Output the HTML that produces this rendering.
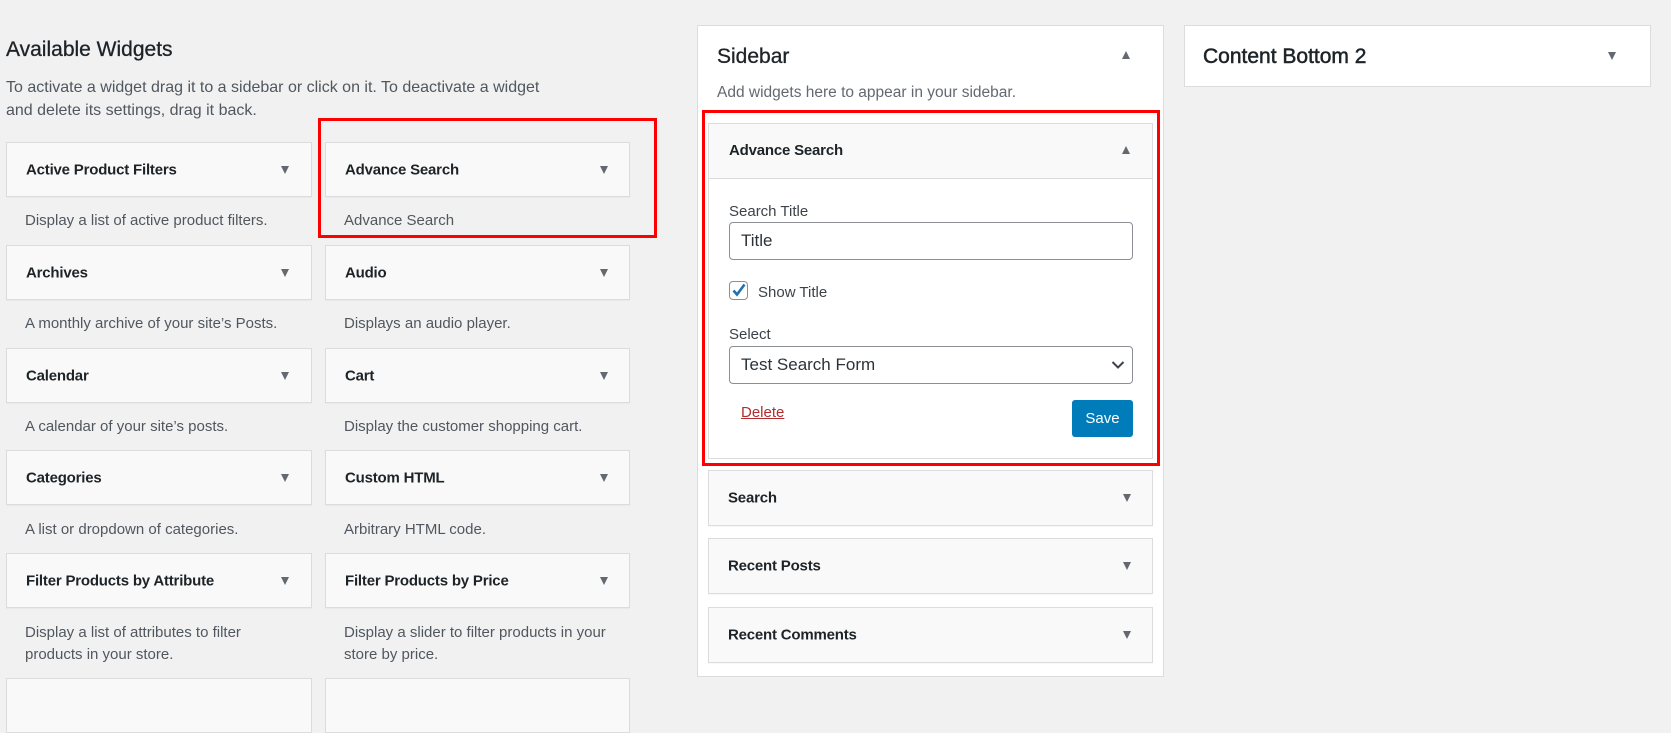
<!DOCTYPE html>
<html><head><meta charset="utf-8"><style>
*{box-sizing:border-box;margin:0;padding:0}
body{width:1671px;height:683px;background:#f1f1f1;font-family:"Liberation Sans",sans-serif;color:#1d2327;position:relative;overflow:hidden}
.a{position:absolute}
.box{position:absolute;background:#f9f9f9;border:1px solid #dcdcde;box-shadow:0 1px 1px rgba(0,0,0,.04)}
.box .t{position:absolute;left:19px;top:50%;transform:translateY(-50%);font-size:15px;font-weight:bold;letter-spacing:-0.2px;white-space:nowrap;color:#1d2327}
.arr{position:absolute;width:0;height:0;border-left:4px solid transparent;border-right:4px solid transparent;border-top:8px solid #646970}
.up{border-top:none;border-bottom:8px solid #646970}
.d{position:absolute;font-size:15px;color:#50575e;line-height:22px}
.lbl{position:absolute;font-size:15px;color:#3c434a}
.inp{position:absolute;background:#fff;border:1px solid #8c8f94;border-radius:4px;font-size:17px;color:#2c3338;padding-left:11px;line-height:36px}
</style></head><body>
<div class="a" style="left:6px;top:38px;font-size:21px;color:#1d2327;-webkit-text-stroke:0.3px #1d2327">Available Widgets</div>
<div class="d" style="left:6px;top:76px;font-size:16px;line-height:23px;color:#50575e">To activate a widget drag it to a sidebar or click on it. To deactivate a widget<br>and delete its settings, drag it back.</div>

<div class="box" style="left:6px;top:142px;width:306px;height:55px"><span class="t">Active Product Filters</span><span class="arr" style="left:274px;top:23px"></span></div>
<div class="box" style="left:325px;top:142px;width:305px;height:55px"><span class="t">Advance Search</span><span class="arr" style="left:274px;top:23px"></span></div>
<div class="d" style="left:25px;top:210px">Display a list of active product filters.</div>
<div class="d" style="left:344px;top:210px">Advance Search</div>

<div class="box" style="left:6px;top:245px;width:306px;height:55px"><span class="t">Archives</span><span class="arr" style="left:274px;top:23px"></span></div>
<div class="box" style="left:325px;top:245px;width:305px;height:55px"><span class="t">Audio</span><span class="arr" style="left:274px;top:23px"></span></div>
<div class="d" style="left:25px;top:313px">A monthly archive of your site’s Posts.</div>
<div class="d" style="left:344px;top:313px">Displays an audio player.</div>

<div class="box" style="left:6px;top:348px;width:306px;height:55px"><span class="t">Calendar</span><span class="arr" style="left:274px;top:23px"></span></div>
<div class="box" style="left:325px;top:348px;width:305px;height:55px"><span class="t">Cart</span><span class="arr" style="left:274px;top:23px"></span></div>
<div class="d" style="left:25px;top:416px">A calendar of your site’s posts.</div>
<div class="d" style="left:344px;top:416px">Display the customer shopping cart.</div>

<div class="box" style="left:6px;top:450px;width:306px;height:55px"><span class="t">Categories</span><span class="arr" style="left:274px;top:23px"></span></div>
<div class="box" style="left:325px;top:450px;width:305px;height:55px"><span class="t">Custom HTML</span><span class="arr" style="left:274px;top:23px"></span></div>
<div class="d" style="left:25px;top:519px">A list or dropdown of categories.</div>
<div class="d" style="left:344px;top:519px">Arbitrary HTML code.</div>

<div class="box" style="left:6px;top:553px;width:306px;height:55px"><span class="t">Filter Products by Attribute</span><span class="arr" style="left:274px;top:23px"></span></div>
<div class="box" style="left:325px;top:553px;width:305px;height:55px"><span class="t">Filter Products by Price</span><span class="arr" style="left:274px;top:23px"></span></div>
<div class="d" style="left:25px;top:622px">Display a list of attributes to filter<br>products in your store.</div>
<div class="d" style="left:344px;top:622px">Display a slider to filter products in your<br>store by price.</div>

<div class="box" style="left:6px;top:678px;width:306px;height:55px"></div>
<div class="box" style="left:325px;top:678px;width:305px;height:55px"></div>

<div class="a" style="left:318px;top:118px;width:339px;height:120px;border:3px solid #f00"></div>

<!-- Sidebar panel -->
<div class="a" style="left:697px;top:25px;width:467px;height:652px;background:#fff;border:1px solid #dcdcde"></div>
<div class="a" style="left:717px;top:45px;font-size:21px;-webkit-text-stroke:0.3px #1d2327">Sidebar</div>
<span class="arr up" style="left:1122px;top:51px"></span>
<div class="d" style="left:717px;top:82px;font-size:15.5px;color:#646970">Add widgets here to appear in your sidebar.</div>

<div class="a" style="left:708px;top:123px;width:445px;height:336px;background:#fff;border:1px solid #dcdcde"></div>
<div class="a" style="left:708px;top:123px;width:445px;height:56px;background:#f9f9f9;border:1px solid #dcdcde"></div>
<div class="a" style="left:729px;top:142px;font-size:15px;font-weight:bold;letter-spacing:-0.2px">Advance Search</div>
<span class="arr up" style="left:1122px;top:146px"></span>
<div class="lbl" style="left:729px;top:203px">Search Title</div>
<div class="inp" style="left:729px;top:222px;width:404px;height:38px">Title</div>
<div class="a" style="left:729px;top:281px;width:19px;height:19px;border:1px solid #8c8f94;border-radius:4px;background:#fff"></div>
<svg class="a" style="left:731px;top:282px" width="16" height="16" viewBox="0 0 16 16"><path d="M2.5 8.5 L6 12.5 L13.5 2.5" stroke="#2271b1" stroke-width="2.6" fill="none"/></svg>
<div class="lbl" style="left:758px;top:284px">Show Title</div>
<div class="lbl" style="left:729px;top:326px">Select</div>
<div class="inp" style="left:729px;top:346px;width:404px;height:38px">Test Search Form</div>
<svg class="a" style="left:1111px;top:360px" width="14" height="10" viewBox="0 0 14 10"><path d="M1.5 2 L7 7.5 L12.5 2" stroke="#3c434a" stroke-width="2" fill="none"/></svg>
<div class="a" style="left:741px;top:404px;font-size:15px;color:#b32d2e;text-decoration:underline">Delete</div>
<div class="a" style="left:1072px;top:400px;width:61px;height:37px;background:#007cba;border-radius:3px;color:#fff;font-size:15px;text-align:center;line-height:37px">Save</div>

<div class="a" style="left:702px;top:110px;width:458px;height:356px;border:3px solid #f00"></div>

<div class="box" style="left:708px;top:470px;width:445px;height:56px"><span class="t">Search</span><span class="arr" style="left:414px;top:23px"></span></div>
<div class="box" style="left:708px;top:538px;width:445px;height:56px"><span class="t">Recent Posts</span><span class="arr" style="left:414px;top:23px"></span></div>
<div class="box" style="left:708px;top:607px;width:445px;height:56px"><span class="t">Recent Comments</span><span class="arr" style="left:414px;top:23px"></span></div>

<!-- Content Bottom 2 -->
<div class="a" style="left:1184px;top:25px;width:467px;height:62px;background:#fff;border:1px solid #dcdcde"></div>
<div class="a" style="left:1203px;top:45px;font-size:21px;-webkit-text-stroke:0.5px #1d2327">Content Bottom 2</div>
<span class="arr" style="left:1608px;top:52px"></span>
</body></html>
